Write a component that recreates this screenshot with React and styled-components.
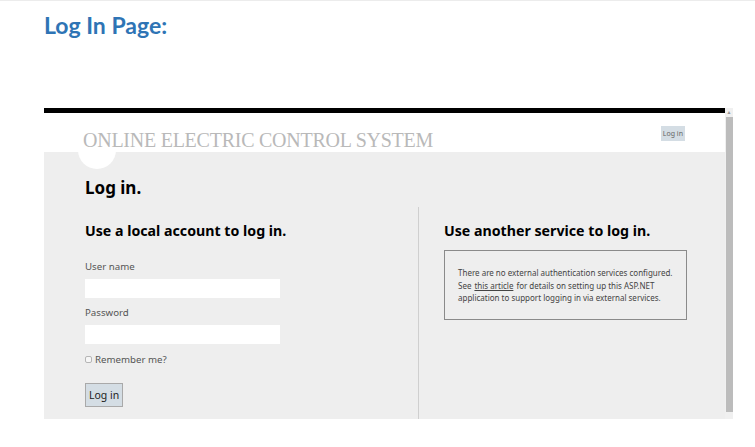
import React from "react";
import styled, { createGlobalStyle } from "styled-components";

const Global = createGlobalStyle`
  html, body { margin: 0; padding: 0; background: #fff; }
  body { font-family: "Noto Sans", "Open Sans", sans-serif; }
  * { box-sizing: border-box; }
`;

const Page = styled.div`
  width: 755px;
  height: 447px;
  overflow: hidden;
  border-top: 1px solid #ececec;
  padding-left: 44px;
`;

const DocTitle = styled.h1`
  margin: 8px 0 0;
  font-family: Lato, "Noto Sans", sans-serif;
  font-weight: 700;
  font-size: 23px;
  line-height: 32px;
  color: #2e74b5;
`;

const Frame = styled.div`
  margin-top: 67px;
  display: flex;
  width: 689px;
  height: 311px;
`;

const Viewport = styled.div`
  width: 681px;
  display: flex;
  flex-direction: column;
`;

const BlackBar = styled.div`
  height: 5px;
  background: #000;
`;

const Header = styled.div`
  position: relative;
  height: 39px;
  background: #fff;
  display: flex;
  align-items: center;
  justify-content: space-between;
  padding: 0 40px 0 39px;
`;

const Brand = styled.div`
  font-family: "Liberation Serif", serif;
  font-size: 20px;
  color: #b9b9b9;
  letter-spacing: -0.25px;
  margin-top: 15px;
  position: relative;
  z-index: 2;
`;

const Bubble = styled.div`
  position: absolute;
  left: 34px;
  top: 18px;
  width: 38px;
  height: 38px;
  border-radius: 50%;
  background: #fff;
  z-index: 1;
`;

const SmallButton = styled.div`
  font-size: 7px;
  color: #666;
  background: #d4dde4;
  padding: 3px 2px;
  margin-top: 2px;
`;

const Body = styled.div`
  flex: 1;
  background: #eeeeee;
  display: flex;
  flex-direction: column;
`;

const PageHeading = styled.h2`
  margin: 0;
  padding: 24px 0 0 41px;
  font-size: 17px;
  font-weight: 700;
  line-height: 24px;
  color: #000;
`;

const Columns = styled.div`
  flex: 1;
  display: flex;
  margin-top: 7px;
`;

const Column = styled.div`
  width: ${(p) => p.$w}px;
  padding-left: ${(p) => p.$pl}px;
  border-left: ${(p) => (p.$divider ? "1px solid #cfcfcf" : "none")};
  padding-top: 12px;
`;

const SectionTitle = styled.h3`
  margin: 0;
  font-size: 14.2px;
  font-weight: 700;
  line-height: 24px;
  color: #000;
`;

const Label = styled.div`
  font-size: 9.7px;
  color: #555;
  line-height: 14px;
  margin-top: ${(p) => p.$mt}px;
`;

const Input = styled.div`
  width: 195px;
  height: 19px;
  background: #fff;
  margin-top: 5px;
`;

const CheckRow = styled.div`
  display: flex;
  align-items: center;
  gap: 3px;
  margin-top: 9px;
  font-size: 9.7px;
  color: #555;
`;

const Check = styled.span`
  width: 7px;
  height: 7px;
  border: 1px solid #b5b5b5;
  border-radius: 2px;
  background: #f6f6f6;
`;

const Button = styled.div`
  display: inline-block;
  margin-top: 17px;
  width: 38px;
  height: 24px;
  border: 1px solid #a9a9a9;
  background: #d4dde4;
  font-size: 10.5px;
  color: #222;
  text-align: center;
  line-height: 22px;
`;

const InfoBox = styled.div`
  margin-top: 7px;
  width: 243px;
  height: 70px;
  border: 1px solid #8a8a8a;
  padding: 16px 0 0 13px;
  font-size: 8px;
  line-height: 12.5px;
  color: #444;
`;

const Link = styled.span`
  text-decoration: underline;
  margin: 0 3px;
`;

const Scrollbar = styled.div`
  width: 8px;
  background: #f0f0f0;
  display: flex;
  flex-direction: column;
  align-items: center;
`;

const Arrow = styled.div`
  height: 9px;
  font-size: 5px;
  color: #999;
  line-height: 9px;
`;

const Thumb = styled.div`
  width: 7px;
  height: 295px;
  background: #bcbcbc;
`;

export default function App() {
  return (
    <>
      <Global />
      <Page>
        <DocTitle>Log In Page:</DocTitle>
        <Frame>
          <Viewport>
            <BlackBar />
            <Header>
              <Brand>ONLINE ELECTRIC CONTROL SYSTEM</Brand>
              <Bubble />
              <SmallButton>Log in</SmallButton>
            </Header>
            <Body>
              <PageHeading>Log in.</PageHeading>
              <Columns>
                <Column $w={374} $pl={41}>
                  <SectionTitle>Use a local account to log in.</SectionTitle>
                  <Label $mt={17}>User name</Label>
                  <Input />
                  <Label $mt={8}>Password</Label>
                  <Input />
                  <CheckRow>
                    <Check />
                    Remember me?
                  </CheckRow>
                  <Button>Log in</Button>
                </Column>
                <Column $w={307} $pl={25} $divider>
                  <SectionTitle>Use another service to log in.</SectionTitle>
                  <InfoBox>
                    There are no external authentication services configured.
                    <br />
                    See<Link>this article</Link>for details on setting up this ASP.NET
                    <br />
                    application to support logging in via external services.
                  </InfoBox>
                </Column>
              </Columns>
            </Body>
          </Viewport>
          <Scrollbar>
            <Arrow>▲</Arrow>
            <Thumb />
          </Scrollbar>
        </Frame>
      </Page>
    </>
  );
}
